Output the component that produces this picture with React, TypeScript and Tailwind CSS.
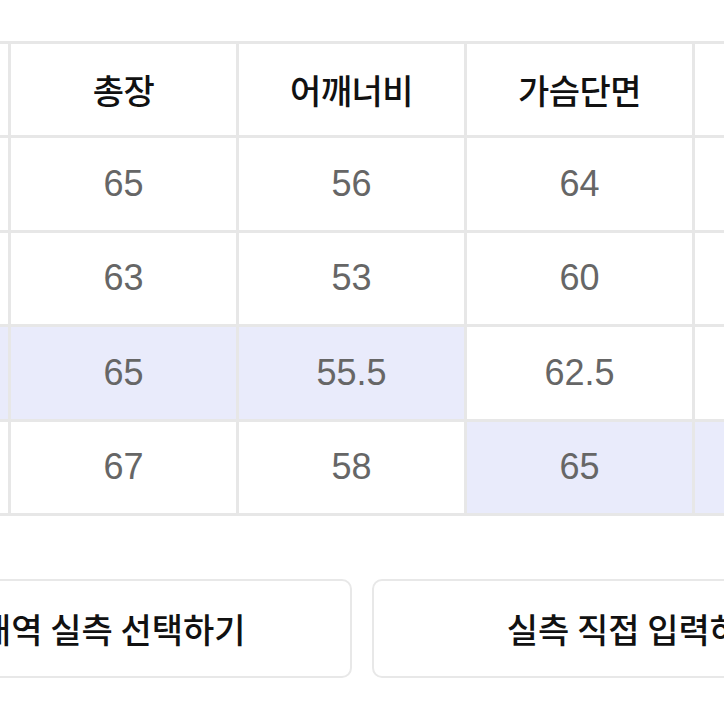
const ko = "font-['Noto_Sans_CJK_KR','Noto_Sans',sans-serif]"
const num = "font-['Liberation_Sans',Arial,sans-serif]"

const headers = ['사이즈', '총장', '어깨너비', '가슴단면', '소매길이']

// hl: which columns of the row get the lavender highlight
const rows: { cells: string[]; hl: number[] }[] = [
  { cells: ['S', '65', '56', '64', '60'], hl: [] },
  { cells: ['M', '63', '53', '60', '58'], hl: [] },
  { cells: ['L', '65', '55.5', '62.5', '61'], hl: [0, 1, 2] },
  { cells: ['XL', '67', '58', '65', '62'], hl: [3, 4] },
]

const cellCls = 'h-[91.4px] flex items-center justify-center'
const btnCls = 'h-[99px] shrink-0 rounded-[10px] border-2 border-[#e8e8e8] bg-white flex items-center justify-center'

export default function App() {
  return (
    <div className="w-[724px] h-[724px] overflow-hidden bg-white">
      <div className="pt-[41px]">
        <div className="ml-[-220px] w-fit grid grid-cols-[repeat(5,225px)] gap-[3px] p-[3px] bg-[#e7e7e7]">
          {headers.map((h) => (
            <div key={h} className={`${cellCls} bg-white`}>
              <span className={`${ko} text-[34px] font-medium text-[#111] tracking-[-0.5px]`}>{h}</span>
            </div>
          ))}
          {rows.map((r, ri) =>
            r.cells.map((c, ci) => (
              <div
                key={`${ri}-${ci}`}
                className={`${cellCls} ${r.hl.includes(ci) ? 'bg-[#e9ebfb]' : 'bg-white'}`}
              >
                <span className={`${num} text-[36px] text-[#666]`}>{c}</span>
              </div>
            ))
          )}
        </div>

        {/* 하단 버튼 */}
        <div className="mt-[63px] ml-[-189px] flex gap-5">
          <button className={`${btnCls} w-[541px]`}>
            <span className={`${ko} text-[34px] font-medium text-[#111]`}>구매내역 실측 선택하기</span>
          </button>
          <button className={`${btnCls} w-[535px]`}>
            <span className={`${ko} text-[34px] font-medium text-[#111]`}>실측 직접 입력하기</span>
          </button>
        </div>
      </div>
    </div>
  )
}
